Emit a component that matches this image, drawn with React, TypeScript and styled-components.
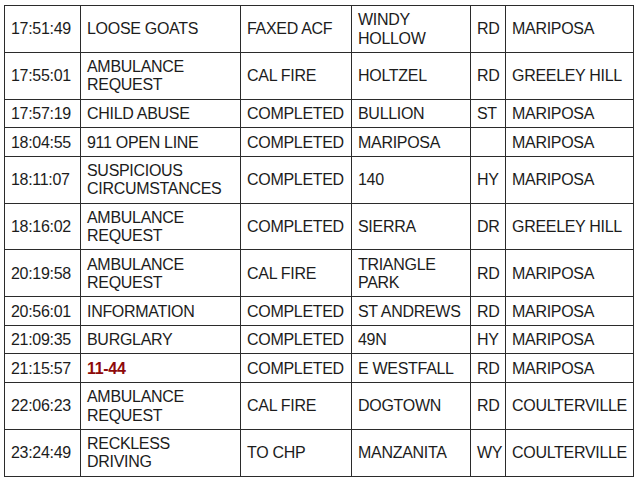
import React from "react";
import styled, { createGlobalStyle } from "styled-components";

interface CallRow {
    time: string;
    call: string;
    disposition: string;
    street: string;
    suffix: string;
    city: string;
    alert?: boolean;
}

const calls: CallRow[] = [
    { time: "17:51:49", call: "LOOSE GOATS", disposition: "FAXED ACF", street: "WINDY HOLLOW", suffix: "RD", city: "MARIPOSA" },
    { time: "17:55:01", call: "AMBULANCE REQUEST", disposition: "CAL FIRE", street: "HOLTZEL", suffix: "RD", city: "GREELEY HILL" },
    { time: "17:57:19", call: "CHILD ABUSE", disposition: "COMPLETED", street: "BULLION", suffix: "ST", city: "MARIPOSA" },
    { time: "18:04:55", call: "911 OPEN LINE", disposition: "COMPLETED", street: "MARIPOSA", suffix: "", city: "MARIPOSA" },
    { time: "18:11:07", call: "SUSPICIOUS CIRCUMSTANCES", disposition: "COMPLETED", street: "140", suffix: "HY", city: "MARIPOSA" },
    { time: "18:16:02", call: "AMBULANCE REQUEST", disposition: "COMPLETED", street: "SIERRA", suffix: "DR", city: "GREELEY HILL" },
    { time: "20:19:58", call: "AMBULANCE REQUEST", disposition: "CAL FIRE", street: "TRIANGLE PARK", suffix: "RD", city: "MARIPOSA" },
    { time: "20:56:01", call: "INFORMATION", disposition: "COMPLETED", street: "ST ANDREWS", suffix: "RD", city: "MARIPOSA" },
    { time: "21:09:35", call: "BURGLARY", disposition: "COMPLETED", street: "49N", suffix: "HY", city: "MARIPOSA" },
    { time: "21:15:57", call: "11-44", disposition: "COMPLETED", street: "E WESTFALL", suffix: "RD", city: "MARIPOSA", alert: true },
    { time: "22:06:23", call: "AMBULANCE REQUEST", disposition: "CAL FIRE", street: "DOGTOWN", suffix: "RD", city: "COULTERVILLE" },
    { time: "23:24:49", call: "RECKLESS DRIVING", disposition: "TO CHP", street: "MANZANITA", suffix: "WY", city: "COULTERVILLE" },
];

const columnWidths = [76, 160, 111, 119, 35, 128];

const GlobalStyle = createGlobalStyle`
    html, body {
        margin: 0;
        padding: 0;
        background: #ffffff;
    }
`;

function App() {
    return (
        <>
            <GlobalStyle />
            <Page>
                <LogTable>
                    <colgroup>
                        {columnWidths.map((w, i) => (
                            <col key={i} style={{ width: w }} />
                        ))}
                    </colgroup>
                    <tbody>
                        {calls.map((row) => (
                            <Row key={row.time}>
                                <Cell>{row.time}</Cell>
                                <Cell $alert={row.alert}>{row.call}</Cell>
                                <Cell>{row.disposition}</Cell>
                                <Cell>{row.street}</Cell>
                                <Cell>{row.suffix}</Cell>
                                <Cell>{row.city}</Cell>
                            </Row>
                        ))}
                    </tbody>
                </LogTable>
            </Page>
        </>
    );
}

const Page = styled.div`
    padding: 5px 0 0 4px;
    font-family: "Liberation Sans", Arial, sans-serif;
`;

const LogTable = styled.table`
    width: 630px;
    table-layout: fixed;
    border-collapse: collapse;
    border: 1px solid #2b2b2b;
`;

const Row = styled.tr`
    vertical-align: middle;
`;

const Cell = styled.td<{ $alert?: boolean }>`
    border: 1px solid #2b2b2b;
    padding: 5.4px 6px 4px;
    font-size: 16px;
    line-height: 18.2px;
    letter-spacing: -0.3px;
    color: ${(props) => (props.$alert ? "#8e0a0a" : "#1c1c1c")};
    font-weight: ${(props) => (props.$alert ? 700 : 400)};
    white-space: normal;
    overflow: hidden;
`;

export default App;
